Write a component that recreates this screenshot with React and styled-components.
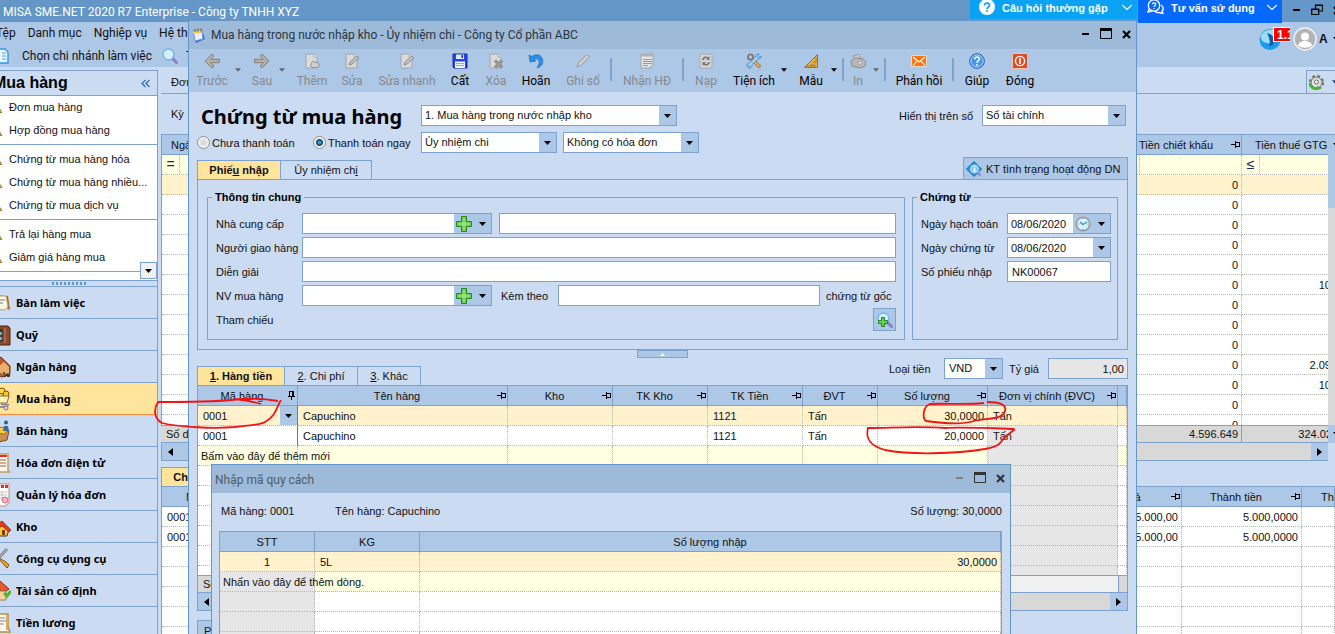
import React from "react";
import styled, { createGlobalStyle } from "styled-components";

const c = {
  line: "#7da2ce",
  frame: "#6596c8",
  bar: "#adc7e6",
  caption: "#9dbad9",
  face: "#cbdbf1",
  tab: "#ffe49c",
  row: "#fff2cc",
  filter: "#ffffe1",
  gray: "#d8d8d8",
  off: "#e6e6e6",
  dots: "#b4b4b4",
};
const ui = `Roboto, "Open Sans", sans-serif`;
const uiBold = `"Noto Sans", "Open Sans", sans-serif`;
const small = `"Liberation Sans", Arial, sans-serif`;

const GlobalStyle = createGlobalStyle`
  *, *::before, *::after { box-sizing: border-box; }
  body { margin: 0; background: ${c.face}; font: 11px/14px ${small}; color: #111; }
  button, input, select { font: inherit; color: inherit; margin: 0; padding: 0; border: 0; border-radius: 0; background: none; }
  svg { display: block; flex: none; }
`;

/* ---------- shell ---------- */
const Screen = styled.div`
  position: relative;
  height: 100vh;
  overflow: hidden;
`;
const MainWindow = styled.div`
  display: flex;
  flex-direction: column;
  height: 100%;
  margin-left: -24px;
  background: ${c.face};
`;
const MainTitle = styled.header`
  flex: none;
  height: 22px;
  padding-left: 27px;
  background: ${c.frame};
  color: #fff;
  font: 12px/24px ${ui};
`;
const MenuBar = styled.nav`
  display: flex;
  align-items: center;
  flex: none;
  gap: 12px;
  height: 22px;
  padding-left: 20px;
  background: ${c.bar};
  font: 12px/20px ${ui};
`;
const BranchBar = styled.div`
  display: flex;
  align-items: center;
  flex: none;
  height: 23px;
  padding-left: 17px;
  gap: 10px;
  background: ${c.bar};
  font: 12px/22px ${ui};
`;
const PlainButton = styled.button`
  display: flex;
  align-items: center;
  gap: ${(p) => p.$gap || 0}px;
`;
const MainBody = styled.div`
  display: flex;
  flex: 1;
  min-height: 0;
`;

/* ---------- sidebar ---------- */
const Sidebar = styled.aside`
  flex: none;
  width: 182px;
  margin-top: 3px;
  border: 1px solid ${c.line};
  border-left: 0;
`;
const SideHead = styled.h2`
  display: flex;
  align-items: center;
  justify-content: space-between;
  height: 25px;
  margin: 0;
  padding: 0 6px 0 17px;
  border-bottom: 1px solid ${c.line};
  font: bold 16px/24px ${small};
  color: #000;
`;
const SideLinks = styled.ul`
  margin: 0;
  padding: 0;
  list-style: none;
  background: #fff;
  position: relative;
  border-bottom: 8px solid #fff;
`;
const SideGroup = styled.div`
  padding: ${(p) => (p.$first ? "0 0 2px" : "3px 0 2px")};
  border-bottom: 1px solid ${c.line};
`;
const SideItem = styled.li`
  display: flex;
  align-items: center;
  height: 23px;
  padding: 0 0 2px 11px;
  gap: 7px;
  a { color: inherit; text-decoration: none; }
`;
const MoreButton = styled.button`
  position: absolute;
  right: 0;
  bottom: -7px;
  display: grid;
  place-items: center;
  width: 17px;
  height: 17px;
  border: 1px solid ${c.line};
  background: #f0f0f0;
`;
const Grip = styled.div`
  height: 7px;
  border-top: 1px solid ${c.line};
  border-bottom: 1px solid ${c.line};
  display: flex;
  gap: 2px;
  padding: 1px 0 0 76px;
  i { width: 2px; height: 3px; background: ${c.frame}; }
`;
const NavItem = styled.button`
  display: flex;
  align-items: center;
  width: 100%;
  height: 32px;
  padding-left: 11px;
  gap: 5px;
  border-bottom: 1px solid ${(p) => (p.$on ? "#ff8c3c" : c.line)};
  background: ${(p) => (p.$on ? c.tab : c.face)};
  font: bold 11px/16px ${uiBold};
  color: #000;
`;

/* ---------- background list ---------- */
const Content = styled.main`
  flex: 1;
  min-width: 0;
  margin-left: 3px;
  display: flex;
  flex-direction: column;
`;
const ContentTabs = styled.div`
  display: flex;
  align-items: center;
  justify-content: space-between;
  height: 27px;
  flex: none;
  padding-left: 10px;
  padding-top: 3px;
  border-bottom: 1px solid ${c.line};
  font: 11px/14px ${small};
`;
const GearButton = styled.button`
  display: flex;
  align-items: center;
  gap: 7px;
  width: 29px;
  height: 23px;
  padding-left: 1px;
  overflow: hidden;
  border: 1px solid ${c.line};
  border-right: 0;
  border-bottom: 0;
`;
const Period = styled.div`
  flex: none;
  height: 40px;
  padding-left: 10px;
  line-height: 40px;
`;
const ListBox = styled.div`
  position: relative;
  flex: none;
`;
const ListFrame = styled.div`
  height: ${(p) => p.$h}px;
  overflow: hidden;
  border-top: 1px solid ${c.line};
  border-left: 1px solid ${c.line};
  background: #fff;
`;
const VScroll = styled.div`
  position: absolute;
  top: 1px;
  right: 0;
  bottom: 0;
  display: flex;
  flex-direction: column;
  justify-content: space-between;
  width: 7px;
  padding: 8px 0 7px 5px;
  overflow: hidden;
  background: linear-gradient(${c.bar} 73px, ${c.gray} 73px, ${c.gray} 290px, ${c.bar} 290px);
`;
const HScroll = styled.div`
  display: flex;
  justify-content: space-between;
  flex: none;
  height: 18px;
  margin-right: ${(p) => p.$right || 0}px;
  border-bottom: 1px solid ${c.line};
  border-left: 1px solid ${c.line};
  border-right: ${(p) => (p.$right ? 0 : 1)}px solid ${c.line};
  background: ${c.gray};
  button { width: 17px; display: grid; place-items: center; background: ${c.bar}; }
`;
const ScrollThumb = styled.div`
  display: flex;
  flex: 0 0 80%;
  background: ${c.bar};
`;
const Gap = styled.div`
  flex: none;
  height: 6px;
`;

/* ---------- tables ---------- */
const Table = styled.table`
  width: 100%;
  table-layout: fixed;
  border-collapse: separate;
  border-spacing: 0;
`;
const Th = styled.th`
  position: relative;
  height: 20px;
  padding: ${(p) => (p.$pin ? "0 11px 0 0" : p.$left ? `0 0 0 ${p.$left}px` : 0)};
  border-right: 1px solid ${c.line};
  border-bottom: 1px solid ${c.line};
  background: ${c.bar};
  font-weight: normal;
  line-height: 18px;
  text-align: ${(p) => (p.$left ? "left" : "center")};
  white-space: nowrap;
  overflow: hidden;
  svg { position: absolute; right: 0; top: 4px; }
`;
const Td = styled.td`
  height: 20px;
  padding: 0 ${(p) => (p.$num ? 3 : 0)}px 0 ${(p) => p.$pad ?? 5}px;
  border-right: 1px ${(p) => (p.$solid ? "solid #777" : `dotted ${c.dots}`)};
  border-bottom: 1px dotted ${c.dots};
  background: ${(p) => p.$bg || "#fff"};
  line-height: 18px;
  text-align: ${(p) => (p.$num ? "right" : p.$center ? "center" : "left")};
  white-space: nowrap;
`;
const FootTd = styled(Td)`
  height: 18px;
  line-height: 16px;
  background: ${(p) => p.$bg || c.gray};
  border-top: 1px solid ${c.line};
  border-bottom: 1px solid ${c.line};
  border-right: ${(p) => (p.$open ? 0 : 1)}px solid ${c.line};
`;
const Operator = styled.span`
  display: block;
  width: 18px;
  height: 19px;
  border-right: 1px dotted ${c.dots};
  text-align: center;
  font: 14px/18px ${small};
  color: #1b2a55;
`;
const CellEditor = styled.span`
  display: flex;
  justify-content: space-between;
  align-items: center;
  height: 19px;
  button { width: 17px; height: 19px; background: ${c.bar}; display: grid; place-items: center; }
`;

/* ---------- document window ---------- */
const DocWindow = styled.section`
  position: absolute;
  top: 20px;
  left: 188px;
  right: 198px;
  bottom: 0;
  overflow: hidden;
  border: 1px solid ${c.frame};
  border-bottom: 0;
  background: ${c.face};
`;
const Caption = styled.header`
  display: flex;
  align-items: center;
  height: 28px;
  padding: 0 5px 0 ${(p) => p.$pad}px;
  gap: 6px;
  background: ${c.caption};
  color: ${(p) => (p.$dim ? "#4e5a68" : "#2b3540")};
  font: 12px/26px ${ui};
`;
const CaptionText = styled.h1`
  flex: 1;
  margin: 0;
  padding-top: ${(p) => (p.$low ? 2 : 0)}px;
  font: inherit;
`;
const CaptionButtons = styled.div`
  display: flex;
  align-items: center;
  gap: ${(p) => p.$gap}px;
  padding-bottom: 2px;
`;
const ToolBar = styled.div`
  display: flex;
  height: 43px;
  padding-left: 1px;
  background: ${c.bar};
`;
const ToolButton = styled.button`
  display: flex;
  flex-direction: column;
  align-items: center;
  flex: none;
  width: ${(p) => p.$w}px;
  padding-top: 4px;
  gap: 4px;
  color: ${(p) => (p.disabled ? "#85898f" : "#000")};
  font: 12px/16px ${ui};
  white-space: nowrap;
`;
const ToolArrow = styled.button`
  flex: none;
  width: 12px;
  padding: 0 0 1px 1px;
`;
const ToolSep = styled.i`
  flex: none;
  width: 2px;
  height: 23px;
  margin-top: 9px;
  background: ${c.line};
`;
const DocBody = styled.div`
  padding: 13px 8px 0 8px;
`;
const DocHead = styled.div`
  display: flex;
  align-items: center;
  height: 21px;
  padding-right: 2px;
`;
const DocTitle = styled.h2`
  width: 224px;
  margin: 0;
  padding: 2px 0 0 4px;
  font: bold 20px/21px ${uiBold};
  color: #000;
  white-space: nowrap;
`;
const HeadLabel = styled.label`
  margin-left: auto;
  margin-right: 9px;
`;
const PayRow = styled.div`
  display: flex;
  align-items: center;
  height: 21px;
  margin-top: 6px;
`;
const RadioLabel = styled.label`
  display: flex;
  align-items: center;
  gap: 2px;
  width: ${(p) => p.$w}px;
`;
const Radio = styled.input`
  appearance: none;
  width: 13px;
  height: 13px;
  border: 1px solid #8a8f94;
  border-radius: 50%;
  background: radial-gradient(circle, #d8dadc 2px, #f6f6f6 5px);
  &:checked {
    background: radial-gradient(circle, #3a9ad0 1px, #0e3f66 3px, #f2f2f2 4px);
  }
`;
const ComboFrame = styled.span`
  display: flex;
  flex: none;
  width: ${(p) => p.$w}px;
  height: 21px;
  margin-left: ${(p) => p.$ml || 0}px;
  border: 1px solid ${c.line};
  background: #fff;
`;
const ComboSelect = styled.select`
  appearance: none;
  flex: 1;
  min-width: 0;
  padding-left: ${(p) => p.$pad ?? 3}px;
  line-height: 17px;
  outline: 0;
`;
const ComboInput = styled.input`
  flex: 1;
  min-width: 0;
  padding-left: 3px;
  outline: 0;
`;
const ComboArrow = styled.span`
  display: grid;
  place-items: center;
  width: 17px;
  background: ${c.bar};
  pointer-events: none;
`;
const ComboButton = styled.button`
  display: grid;
  place-items: center;
  width: ${(p) => p.$w || 17}px;
  background: ${c.bar};
`;
const TextBox = styled.input`
  flex: ${(p) => (p.$w ? "none" : 1)};
  width: ${(p) => (p.$w ? `${p.$w}px` : "auto")};
  min-width: 0;
  height: 21px;
  margin-left: ${(p) => p.$ml || 0}px;
  padding: 0 3px 0 4px;
  border: 1px solid ${c.line};
  background: ${(p) => (p.readOnly ? c.off : "#fff")};
  text-align: ${(p) => (p.readOnly ? "right" : "left")};
  outline: 0;
`;
const TabRow = styled.div`
  display: flex;
  align-items: flex-end;
  height: ${(p) => p.$h}px;
  margin-top: ${(p) => p.$mt || 0}px;
`;
const Tab = styled.button`
  width: ${(p) => p.$w}px;
  height: 19px;
  border: 1px solid ${c.line};
  border-bottom: 0;
  border-left-width: ${(p) => (p.$on ? 1 : 0)}px;
  background: ${(p) => (p.$on ? c.tab : c.face)};
  font-weight: ${(p) => (p.$on ? "bold" : "normal")};
  line-height: 18px;
  white-space: nowrap;
`;
const StatusButton = styled.button`
  display: flex;
  align-items: center;
  gap: 4px;
  width: 165px;
  height: 22px;
  margin-left: auto;
  padding-left: 2px;
  border: 1px solid ${c.line};
  border-bottom: 0;
  background: ${c.bar};
  white-space: nowrap;
`;
const Panel = styled.div`
  display: flex;
  gap: 7px;
  padding: 10px 9px 9px;
  border: 1px solid ${c.line};
`;
const Group = styled.fieldset`
  flex: ${(p) => (p.$w ? "none" : 1)};
  width: ${(p) => (p.$w ? `${p.$w}px` : "auto")};
  min-width: 0;
  margin: 0;
  padding: 9px ${(p) => (p.$w ? 6 : 8)}px 9px 8px;
  border: 1px solid ${c.line};
  legend { height: 14px; margin-left: -4px; padding: 0 3px; font-weight: bold; color: #000; }
`;
const Rows = styled.div`
  display: flex;
  flex-direction: column;
  gap: 3px;
`;
const FormRow = styled.div`
  display: flex;
  align-items: center;
  min-height: 21px;
`;
const RowLabel = styled.label`
  flex: none;
  width: 86px;
`;
const InlineLabel = styled.label`
  flex: none;
  margin-left: ${(p) => p.$ml}px;
  width: ${(p) => p.$w}px;
`;
const RefButton = styled.button`
  display: grid;
  place-items: center;
  width: 23px;
  height: 23px;
  margin: -1px 0 -1px auto;
  border: 1px solid ${c.line};
  background: ${c.bar};
`;
const Collapse = styled.button`
  display: grid;
  place-items: center;
  width: 51px;
  height: 8px;
  margin: 0 auto;
  border: 1px solid ${c.line};
  background: ${c.bar};
`;
const Currency = styled.div`
  display: flex;
  align-items: center;
  align-self: flex-start;
  margin-left: auto;
`;
const GridFrame = styled.div`
  height: 190px;
  overflow: hidden;
  border: 1px solid ${c.line};
  border-bottom: 0;
  background: #fff;
`;
const FootFrame = styled.div`
  border-left: 1px solid ${c.line};
  overflow: hidden;
`;
const BottomButton = styled.button`
  display: block;
  width: 60px;
  height: 22px;
  margin-top: 9px;
  padding-left: 6px;
  border: 1px solid ${c.line};
  background: ${c.bar};
  text-align: left;
`;

/* ---------- specification dialog ---------- */
const Dialog = styled.section`
  position: absolute;
  top: 443px;
  left: 22px;
  right: 125px;
  bottom: 0;
  overflow: hidden;
  border: 1px solid ${c.frame};
  border-bottom: 0;
  background: ${c.face};
`;
const DialogInfo = styled.div`
  display: flex;
  height: 38px;
  padding: 0 8px 0 9px;
  line-height: 36px;
  span:first-child { width: 114px; }
  span:last-child { margin-left: auto; }
`;
const DialogTable = styled.div`
  margin: 0 8px 0 7px;
  border: 1px solid ${c.line};
  border-bottom: 0;
  background: #fff;
`;

/* ---------- top right ---------- */
const Faq = styled.button`
  position: absolute;
  top: 0;
  right: ${(p) => p.$right}px;
  display: flex;
  align-items: flex-start;
  width: ${(p) => p.$w}px;
  height: ${(p) => p.$h}px;
  padding: 0 5px 0 9px;
  background: ${(p) => p.$bg};
  color: #fff;
  font: bold 11px/16px ${small};
  white-space: nowrap;
  span { margin-left: 7px; margin-right: auto; }
`;
const AppButtons = styled.div`
  position: absolute;
  top: 4px;
  right: -7px;
  display: flex;
  align-items: center;
  gap: 10px;
`;
const Account = styled.div`
  position: absolute;
  top: 27px;
  right: 0;
  display: flex;
  align-items: center;
  width: 76px;
  overflow: hidden;
  font: bold 12px/16px ${small};
`;
const Badge = styled.span`
  align-self: flex-start;
  flex: none;
  width: 17px;
  height: 15px;
  margin-left: -8px;
  margin-right: 3px;
  padding-left: 3px;
  overflow: hidden;
  border: 1px solid #fff;
  border-right: 0;
  background: #f00;
  color: #fff;
  line-height: 14px;
  z-index: 1;
`;
const Initial = styled.span`
  margin: 0 5px 0 2px;
`;
const Marks = styled.svg`
  position: absolute;
  top: 0;
  left: 0;
  pointer-events: none;
`;

/* ---------- icons ---------- */
const Down = ({ w = 7, fill = "#000" }) => (
  <svg width={w} height="4" viewBox="0 0 7 4"><path d="M0 0h7L3.500 4z" fill={fill} /></svg>
);
const Side = ({ flip }) => (
  <svg width="5" height="8" viewBox="0 0 5 8"><path d={flip ? "M5 0v8L0 4z" : "M0 0v8l5-4z"} fill="#000" /></svg>
);
const Pin = ({ up }) => (
  <svg width="10" height="10" viewBox="0 0 10 10" fill="none" stroke="#000" strokeWidth="1" shapeRendering="crispEdges">
    {up ? <path d="M2.500 1v5M6.500 1v5M5.500 1v5M2 1.500h5M1 6.500h7M4.500 7v3" /> : <path d="M0 5.500h4M4.500 2v7M5 3.500h4M5 7.500h4M8.500 3v5" />}
  </svg>
);
const Min = ({ color = "#000" }) => <svg width="8" height="12"><path d="M0 5h7v2H0z" fill={color} /></svg>;
const Max = ({ color = "#000" }) => <svg width="12" height="12"><path d="M.5 1h11v9.500H.5z" fill="none" stroke={color} /><path d="M0 0h12v3H0z" fill={color} /></svg>;
const Close = ({ color = "#000" }) => <svg width="9" height="9"><path d="M1 1l7 7M8 1L1 8" stroke={color} strokeWidth="2.200" /></svg>;
const Restore = () => (
  <svg width="12" height="12" fill="none" stroke="#000"><path d="M4.500 5V1h7v6H8M4 1.500h8" strokeWidth="1.200" /><path d="M.7 5h7v5.500h-7zM0 5.500h8" strokeWidth="1.200" /></svg>
);
const Arrow = ({ flip }) => (
  <svg width="16" height="16" viewBox="0 0 16 16"><path transform={flip ? "translate(16 0) scale(-1 1)" : undefined} d="M8 1L1 8l7 7 2-2-3.300-3.300H15.500V6.300H6.700L10 3z" fill="#b4b0a8" stroke="#807b73" strokeWidth=".9" /></svg>
);
const Doc = ({ children }) => (
  <svg width="16" height="16" viewBox="0 0 16 16"><path d="M2 1h8l3 3v11H2z" fill="#d9dadb" stroke="#a3a6a8" /><path d="M10 1v3h3" fill="#fff" stroke="#a3a6a8" />{children}</svg>
);
const icons = {
  back: <Arrow />,
  next: <Arrow flip />,
  add: <Doc><path d="M8 9.500c0-2 3-2 3 0h3l1.500 2.500-1.500 2.500H8l-1.500-2z" fill="#cfcfcf" stroke="#8f8f8f" /></Doc>,
  edit: <Doc><path d="M5 12l1-3 7-6 2 2-7 6z" fill="#c4c4c4" stroke="#8e8e8e" /></Doc>,
  save: (
    <svg width="16" height="16" viewBox="0 0 16 16"><path d="M1 1h14v14H2l-1-1z" fill="#2446e8" stroke="#1228a8" /><path d="M4 1.500h8V6H4z" fill="#dfe9ff" /><path d="M9.500 2h1.500v3H9.500z" fill="#1228a8" /><path d="M3 8.500h10V15H3z" fill="#eef3ff" /><path d="M4 10.500h8M4 12.500h8" stroke="#8aa6ee" /></svg>
  ),
  del: <Doc><path d="M7 7.500l7 7M14 7.500l-7 7" stroke="#7c7c7c" strokeWidth="3" /><path d="M7 7.500l7 7M14 7.500l-7 7" stroke="#c2c2c2" strokeWidth="1" /></Doc>,
  undo: <svg width="16" height="16" viewBox="0 0 16 16"><path d="M1 2l1 7 6-1-2-2c3-1 6 1 5 5l-2 4c4-1 7-5 5.500-9C13 1.500 8 .5 4 3.500z" fill="#2b8fe4" stroke="#1a64b4" strokeWidth=".6" /></svg>,
  post: <svg width="16" height="16" viewBox="0 0 16 16"><path d="M2 14l1-4 9-8.500L14.500 4l-9 8.500z" fill="#cfcfcf" stroke="#999" /></svg>,
  invoice: <svg width="16" height="16" viewBox="0 0 16 16"><path d="M2 1h12v10l-3 4H2z" fill="#e4e4e4" stroke="#a4a4a4" /><path d="M2 1h12v2.500H2z" fill="#b2b2b2" /><path d="M4 6.500h9M4 8.500h9M4 10.500h9M4 12.500h5" stroke="#999" /></svg>,
  reload: <svg width="16" height="16" viewBox="0 0 16 16"><path d="M2 1h12v14H2z" fill="#d6d6d6" stroke="#aaa" /><path d="M5 7c0-3 4-3.500 5.500-1.500M11 9c0 3-4 3.500-5.500 1.500" fill="none" stroke="#777" strokeWidth="1.600" /><path d="M11.500 3v4H8zM4.500 13V9H8z" fill="#777" /></svg>,
  tools: (
    <svg width="16" height="16" viewBox="0 0 16 16"><path d="M6 6l8 8" stroke="#b5651d" strokeWidth="3.400" /><path d="M7 7l6.500 6.500" stroke="#f4b04e" strokeWidth="1.800" /><circle cx="4.500" cy="4" r="2.600" fill="none" stroke="#83796e" strokeWidth="1.800" /><path d="M15 3l-3 1.500-1-1L13 1c-2-.5-4 1-3.500 3L3.500 10c-2 0-3 1.500-2.500 3.500l2-1 1 1L2.500 15c2 .5 4-1 3.500-3.500L12 6c2 0 3.500-1 3-3z" fill="#a9d3f5" stroke="#3a82c4" strokeWidth=".8" /></svg>
  ),
  ruler: <svg width="16" height="16" viewBox="0 0 16 16"><path d="M14.500 1.500v13h-13z" fill="#f5b53c" stroke="#a9701a" /><path d="M11.500 8v4h-4z" fill="#adc7e6" stroke="#a9701a" strokeWidth=".7" /><path d="M4 13.500v-1M6 13.500v-1M8 13.500v-1M10 13.500v-1M12 13.500v-1M13.500 5h-1M13.500 7h-1M13.500 9h-1" stroke="#5c3a08" /></svg>,
  print: <svg width="16" height="16" viewBox="0 0 16 16"><path d="M3 3l6-2 2 4-6 2z" fill="#c4c4c4" stroke="#969696" strokeWidth=".8" /><path d="M1 8l4-3 8 1 3 3-1 4-5 2-8-2z" fill="#b8b8b8" stroke="#8e8e8e" /><circle cx="10" cy="10" r="1.800" fill="#dedede" stroke="#999" strokeWidth=".7" /></svg>,
  mail: <svg width="16" height="16" viewBox="0 0 16 16"><path d="M.5 2.500h15v11H.5z" fill="#ff7411" stroke="#e0dcd0" /><path d="M2 4l6 5 6-5M2 12.500l4-4.500M14 12.500L10 8" fill="none" stroke="#fff" strokeWidth="1.100" /></svg>,
  help: <svg width="16" height="16" viewBox="0 0 16 16"><circle cx="8" cy="8" r="7.300" fill="#4796e8" stroke="#1d56ae" /><circle cx="8" cy="8" r="6.200" fill="none" stroke="#d5e8fc" strokeWidth=".8" /><path d="M5.800 6.200c0-3 4.600-2.800 4.600-.2C10.400 7.700 8 7.800 8 9.700M8 11v1.700" fill="none" stroke="#fff" strokeWidth="1.600" /></svg>,
  exit: <svg width="16" height="16" viewBox="0 0 16 16"><path d="M.5.5h15v15H.5z" fill="#dd4a24" stroke="#f2c4b0" /><circle cx="8" cy="8" r="4.600" fill="none" stroke="#fff" strokeWidth="1.400" /><path d="M8 5v6" stroke="#fff" strokeWidth="1.600" /></svg>,
};
const Plus = () => (
  <svg width="16" height="16" viewBox="0 0 16 16"><path d="M5.500 .5h5v5h5v5h-5v5h-5v-5h-5v-5h5z" fill="#6ccc4e" stroke="#1f8a1d" /><path d="M7.500 2h1v12h-1zM2 7.500h12v1H2z" fill="#b5ec9c" /></svg>
);
const Clock = () => (
  <svg width="16" height="16" viewBox="0 0 16 16"><circle cx="8" cy="8" r="6.800" fill="#d4f1f7" stroke="#8f9da6" strokeWidth="1.600" /><path d="M5 6l3 2.500L12 6" fill="none" stroke="#3f86b4" strokeWidth="1.200" /><path d="M8 2v1M8 13v1M2.500 8h1M12.500 8h1" stroke="#d45a3c" /></svg>
);
const Lens = ({ plus, size = 16 }) => (
  <svg width={size} height={size} viewBox="0 0 16 16"><path d="M10.500 10.500l4 4" stroke="#8e7cc8" strokeWidth="3" strokeLinecap="round" /><circle cx="6.500" cy="6.500" r="5.500" fill="#d2effc" stroke="#6eb4e2" strokeWidth="1.300" />{plus && <path d="M4.500 5.500h3v3h3v3h-3v3h-3v-3h-3v-3h3z" fill="#6ccc4e" stroke="#1f8a1d" />}</svg>
);
const Info = () => (
  <svg width="16" height="16" viewBox="0 0 16 16"><path d="M8 .5L15.500 8 8 15.500.5 8z" fill="#1f94dc" stroke="#1670b6" /><circle cx="8.500" cy="8" r="4" fill="#7cc8f4" stroke="#bfe6fb" /><path d="M8.500 5v1.200M8.500 7.300v3.400" stroke="#fff" strokeWidth="1.800" /><path d="M12 12l2.500 2.500" stroke="#9683cc" strokeWidth="2.400" /></svg>
);
const Notes = () => (
  <svg width="13" height="15" viewBox="0 0 13 15"><path d="M1 5l9-3 3 9-9 4z" fill="#2f6fd6" /><path d="M1 3l9-1 1 9-8 2z" fill="#e6f0ff" stroke="#6d8fd0" /><path d="M1 3l9-1v3L1 6z" fill="#f3cc54" /><path d="M3 1v3M6 .5v3M9 .5v3" stroke="#555" /></svg>
);
const Gear = () => (
  <svg width="17" height="17" viewBox="0 0 17 17"><circle cx="8.500" cy="8.500" r="6" fill="#d6d9d4" stroke="#707671" strokeWidth="3.200" strokeDasharray="2.700 2" /><circle cx="8.500" cy="8.500" r="5.300" fill="#dfe2de" stroke="#7d827e" /><path d="M2 9c0 4 3.500 6.500 8 5.500" fill="none" stroke="#43b52f" strokeWidth="2.600" /><path d="M9 11.500l3.500 3-4 2z" fill="#43b52f" /><circle cx="8.500" cy="8" r="2" fill="#fff" stroke="#666" /></svg>
);
const Dot = () => <svg width="15" height="16" viewBox="0 0 15 16"><path d="M2 14V3h6l3 5 4 5.500z" fill="#e9d56a" stroke="#8c7a16" /></svg>;
const Page = () => (
  <svg width="16" height="16" viewBox="0 0 16 16"><path d="M1 1h11l3 3v11H1z" fill="#e8f6ff" stroke="#2d9be0" strokeWidth="1.400" /><path d="M9 5h4M9 8h4M9 11h4" stroke="#4aa9e4" /></svg>
);
const ChevronSvg = styled.svg`
  margin-top: 4px;
`;
const Chevron = () => <ChevronSvg width="10" height="7"><path d="M0 1l5 4.500L10 1" fill="none" stroke="#fff" strokeWidth="1.100" /></ChevronSvg>;

const NavIcon = ({ children }) => <svg width="24" height="24" viewBox="0 0 24 24">{children}</svg>;
const navIcons = [
  <NavIcon><path d="M6 4l15 1 2 14-6-3-12 3z" fill="#a66a2d" /><path d="M5 5h14l2 11-3 3-13-1z" fill="#fdf6e4" stroke="#c4a067" /><path d="M12 9h6M12 12h4" stroke="#6b7a8c" /></NavIcon>,
  <NavIcon><path d="M3 3h18l2 2v17H3z" fill="#8c4a2e" stroke="#4a2212" /><path d="M6 6h10v13H6z" fill="#33393c" /><path d="M10 9h5v3h-5zM10 14h5v3h-5z" fill="#9aa3a3" /><path d="M18 5v15" stroke="#c98358" /></NavIcon>,
  <NavIcon><path d="M5 10l9-8 9 9v8l-8 3-10-4z" fill="#b75c2e" stroke="#6a3216" /><path d="M12 11l5-4 5 5v6l-5 2-5-3z" fill="#e9b06c" /><path d="M17 21h6M16 18l7 3" stroke="#403020" strokeWidth="2" strokeDasharray="2 1" /></NavIcon>,
  <NavIcon><circle cx="15" cy="4" r="3" fill="#ffd83c" stroke="#7a5200" /><circle cx="19" cy="7" r="3" fill="#ffc51e" stroke="#7a5200" /><path d="M8 9h14l-2 7H10z" fill="#fff2b8" stroke="#8a6d3a" /><path d="M14 17l8 1M10 20h10" stroke="#8f8f95" strokeWidth="2" /><circle cx="19" cy="21" r="2" fill="#ddd" stroke="#777" /></NavIcon>,
  <NavIcon><path d="M4 12h18l-2 9-8 2-8-3z" fill="#c98d51" stroke="#7b4a1e" /><path d="M7 12c2-5 12-5 13 0l-2 3-9-1z" fill="#ffc93a" stroke="#a87412" /><circle cx="19" cy="3.500" r="2" fill="#3c5c88" /><path d="M17 7h4l1 5h-6z" fill="#3c6ca8" /></NavIcon>,
  <NavIcon><path d="M6 3h15v17l2 1H7z" fill="#fffaf0" stroke="#cf9a5e" strokeWidth="1.500" /><path d="M12 5h8" stroke="#de3030" strokeWidth="2" /><path d="M13 9h6M13 12h6M13 15h6" stroke="#9a5f3a" /></NavIcon>,
  <NavIcon><path d="M4 1h18v19l-4 3H4z" fill="#fff" stroke="#c88a5c" /><path d="M6 3.500h15" stroke="#e02a3a" strokeWidth="3" strokeDasharray="3 1" /><path d="M10 9h10M10 12h10M10 15h7M15 8v10" stroke="#c9c2cc" /><circle cx="18" cy="17" r="3" fill="#f4b8cc" stroke="#d8628c" /></NavIcon>,
  <NavIcon><path d="M9 14l7-5 6 5-2 7H12z" fill="#ffcb3c" stroke="#5c3208" /><path d="M6 12l9-6 9 9-2 2-7-6-6 4z" fill="#e6391d" stroke="#7a1a0a" strokeWidth=".7" /><path d="M15 15h3v5h-3z" fill="#7a4310" /></NavIcon>,
  <NavIcon><path d="M20 2L9 14" stroke="#777b80" strokeWidth="3" /><path d="M21 1L11 12" stroke="#d4d7da" strokeWidth="1" /><path d="M10 10l10 11 2-3-3-3z" fill="#f2a52c" stroke="#80500d" /></NavIcon>,
  <NavIcon><path d="M5 9l8-7 9 8-3 2H9z" fill="#e85a2c" stroke="#8e2a0c" /><path d="M9 12h10v9H9z" fill="#f4d4a0" stroke="#a87440" /><path d="M17 14l3 3 4-5" fill="none" stroke="#51b52e" strokeWidth="3" /></NavIcon>,
  <NavIcon><path d="M5 3h16v13l2 5H6z" fill="#fff8e6" stroke="#b88a4c" strokeWidth="1.400" /><path d="M12 7h6M12 10h7M12 13h5" stroke="#7d8794" /><path d="M20 4v15" stroke="#d8ab5c" strokeWidth="2" /></NavIcon>,
];

/* ---------- data ---------- */
const sideGroups = [
  ["Đơn mua hàng", "Hợp đồng mua hàng"],
  ["Chứng từ mua hàng hóa", "Chứng từ mua  hàng nhiều...", "Chứng từ mua dịch vụ"],
  ["Trả lại hàng mua", "Giảm giá hàng mua"],
];
const navs = ["Bàn làm việc", "Quỹ", "Ngân hàng", "Mua hàng", "Bán hàng", "Hóa đơn điện tử", "Quản lý hóa đơn", "Kho", "Công cụ dụng cụ", "Tài sản cố định", "Tiền lương"];
const taxes = ["", "", "", "", "", "10", "", "", "", "2.09", "10", "", ""];
const tools = [
  ["back", "Trước", 44, 1], ["arrow", 1], ["next", "Sau", 32, 1], ["arrow", 1],
  ["add", "Thêm", 44, 1], ["edit", "Sửa", 36, 1], ["edit", "Sửa nhanh", 74, 1],
  ["save", "Cất", 32], ["del", "Xóa", 40, 1], ["undo", "Hoãn", 40], ["post", "Ghi sổ", 54, 1], ["sep"],
  ["invoice", "Nhận HĐ", 70, 1], ["sep"], ["reload", "Nạp", 44, 1], ["tools", "Tiện ích", 52], ["arrow"],
  ["ruler", "Mẫu", 38], ["arrow"], ["sep"], ["print", "In", 28, 1], ["arrow", 1], ["sep"],
  ["mail", "Phản hồi", 66], ["sep"], ["help", "Giúp", 46], ["exit", "Đóng", 40],
];
const gridCols = [100, 210, 105, 95, 95, 75, 110, 130, 9];
const gridHeads = ["Mã hàng", "Tên hàng", "Kho", "TK Kho", "TK Tiền", "ĐVT", "Số lượng", "Đơn vị chính (ĐVC)"];
const Cols = ({ widths, auto }) => (
  <colgroup>{widths.map((w, i) => <col key={i} width={i === auto ? undefined : w} />)}</colgroup>
);

function Combo({ id, value, w, ml, pad }) {
  return (
    <ComboFrame $w={w} $ml={ml}>
      <ComboSelect id={id} aria-label={id ? undefined : value} $pad={pad} defaultValue={value}>
        <option>{value}</option>
      </ComboSelect>
      <ComboArrow><Down /></ComboArrow>
    </ComboFrame>
  );
}
function Picker({ id, value = "", w, children }) {
  return (
    <ComboFrame $w={w}>
      <ComboInput id={id} defaultValue={value} />
      {children}
      <ComboButton type="button" aria-label="Chọn"><Down /></ComboButton>
    </ComboFrame>
  );
}

function MainSidebar() {
  return (
    <Sidebar>
      <SideHead>
        Mua hàng
        <svg width="10" height="9" fill="none" stroke="#3c6ea8" strokeWidth="1.300"><path d="M4.500 1l-3.500 3.500 3.500 3.500M8.500 1L5 4.500 8.500 8" /></svg>
      </SideHead>
      <SideLinks>
        {sideGroups.map((group, g) => (
          <SideGroup key={g} $first={g === 0}>
            {group.map((t) => <SideItem key={t}><Dot /><a href="#list">{t}</a></SideItem>)}
          </SideGroup>
        ))}
        <MoreButton aria-label="Thêm mục"><Down /></MoreButton>
      </SideLinks>
      <Grip>{Array.from({ length: 9 }, (_, i) => <i key={i} />)}</Grip>
      {navs.map((t, i) => <NavItem key={t} $on={i === 3}>{navIcons[i]}{t}</NavItem>)}
    </Sidebar>
  );
}

function BackgroundLists() {
  const top = [96, 0, 120, 93];
  const low = [92, 0, 110, 120, 33];
  return (
    <Content>
      <ContentTabs>Đơn mua hàng<GearButton aria-label="Tùy chọn"><Gear /><Down w={6} fill="#1c3f7c" /></GearButton></ContentTabs>
      <Period>Kỳ</Period>
      <ListBox>
        <ListFrame $h={291}>
          <Table>
            <Cols widths={top} auto={1} />
            <thead><tr><Th>Ngày hạch toán</Th><Th /><Th $pin>Tiền chiết khấu<Pin /></Th><Th $left={13}>Tiền thuế GTG</Th></tr></thead>
            <tbody>
              <tr>
                <Td $bg={c.filter} $pad={0}><Operator>=</Operator></Td>
                <Td $bg={c.filter} />
                <Td $bg={c.filter} $pad={0}><Operator /></Td>
                <Td $bg={c.filter} $pad={0}><Operator>≤</Operator></Td>
              </tr>
              {taxes.map((t, i) => {
                const bg = i === 0 ? c.row : "#fff";
                return <tr key={i}><Td $bg={bg} /><Td $bg={bg} /><Td $bg={bg} $num>0</Td><Td $bg={bg} $num>{t}</Td></tr>;
              })}
            </tbody>
          </Table>
        </ListFrame>
        <Table>
          <Cols widths={top} auto={1} />
          <tbody><tr><FootTd>Số dòng</FootTd><FootTd /><FootTd $num>4.596.649</FootTd><FootTd $num $open>324.02</FootTd></tr></tbody>
        </Table>
        <VScroll><Down /><Down /></VScroll>
      </ListBox>
      <HScroll $right={7}><ScrollThumb><button aria-label="Trái"><Side flip /></button></ScrollThumb><button aria-label="Phải"><Side /></button></HScroll>
      <Gap />
      <TabRow $h={20}><Tab $on $w={62}>Chi tiết</Tab></TabRow>
      <ListFrame $h={190}>
        <Table>
          <Cols widths={low} auto={1} />
          <thead><tr><Th>Mã hàng</Th><Th /><Th $pin>Đơn giá<Pin /></Th><Th $pin>Thành tiền<Pin /></Th><Th $left={19}>Th</Th></tr></thead>
          <tbody>
            {[0, 1, 2, 3, 4, 5, 6].map((i) => (
              <tr key={i}><Td>{i < 2 ? "0001" : ""}</Td><Td /><Td $num>{i < 2 ? "5.000,00" : ""}</Td><Td $num>{i < 2 ? "5.000,0000" : ""}</Td><Td /></tr>
            ))}
          </tbody>
        </Table>
      </ListFrame>
    </Content>
  );
}

function ItemsGrid() {
  return (
    <>
      <GridFrame>
        <Table>
          <Cols widths={gridCols} auto={1} />
          <thead>
            <tr>{gridHeads.map((h, i) => <Th key={h} $pin>{h}<Pin up={i === 0} /></Th>)}<Th /></tr>
          </thead>
          <tbody>
            {["30,0000", "20,0000"].map((qty, i) => {
              const bg = i ? "#fff" : c.row;
              return (
                <tr key={qty}>
                  <Td $bg={bg} $solid>{i ? "0001" : <CellEditor>0001<button aria-label="Chọn mã hàng"><Down /></button></CellEditor>}</Td>
                  <Td $bg={bg}>Capuchino</Td><Td $bg={bg} /><Td $bg={bg} />
                  <Td $bg={bg}>1121</Td><Td $bg={bg}>Tấn</Td><Td $bg={bg} $num>{qty}</Td>
                  <Td $bg={i ? c.off : c.row}>Tấn</Td><Td $bg={bg} />
                </tr>
              );
            })}
            <tr>
              <Td $bg={c.filter} $pad={3}>Bấm vào đây để thêm mới</Td>
              {[1, 2, 3, 4, 5, 6, 7, 8].map((k) => <Td key={k} $bg={k === 7 ? c.off : c.filter} />)}
            </tr>
            {[0, 1, 2, 3, 4, 5].map((r) => (
              <tr key={r}>{gridCols.map((_, k) => <Td key={k} $bg={k === 7 ? c.off : "#fff"} />)}</tr>
            ))}
          </tbody>
        </Table>
      </GridFrame>
      <FootFrame>
        <Table>
          <Cols widths={gridCols} auto={1} />
          <tbody><tr><FootTd>Số dòng</FootTd>{[1, 2, 3, 4, 5, 6].map((k) => <FootTd key={k} />)}<FootTd $bg="#f0f0f0" /><FootTd /></tr></tbody>
        </Table>
      </FootFrame>
      <HScroll><button aria-label="Trái"><Side flip /></button><button aria-label="Phải"><Side /></button></HScroll>
      <BottomButton>Phím tắt</BottomButton>
    </>
  );
}

function SpecDialog() {
  return (
    <Dialog>
      <Caption $pad={3} $dim>
        <CaptionText $low>Nhập mã quy cách</CaptionText>
        <CaptionButtons $gap={10}><Min color="#7b8087" /><Max color="#333" /><Close color="#333" /></CaptionButtons>
      </Caption>
      <DialogInfo><span>Mã hàng: 0001</span><span>Tên hàng: Capuchino</span><span>Số lượng: 30,0000</span></DialogInfo>
      <DialogTable>
        <Table>
          <Cols widths={[95, 105, 0]} auto={2} />
          <thead><tr><Th>STT</Th><Th>KG</Th><Th>Số lượng nhập</Th></tr></thead>
          <tbody>
            <tr><Td $bg={c.row} $center $pad={0}>1</Td><Td $bg={c.row}>5L</Td><Td $bg={c.row} $num>30,0000</Td></tr>
            <tr><Td $bg={c.off} $pad={3}>Nhấn vào đây để thêm dòng.</Td><Td $bg={c.filter} /><Td $bg={c.filter} /></tr>
            {[0, 1, 2].map((r) => <tr key={r}><Td $bg={c.off} /><Td /><Td /></tr>)}
          </tbody>
        </Table>
      </DialogTable>
    </Dialog>
  );
}

function PurchaseWindow() {
  return (
    <DocWindow>
      <Caption $pad={3}>
        <Notes />
        <CaptionText>Mua hàng trong nước nhập kho - Ủy nhiệm chi - Công ty Cổ phần ABC</CaptionText>
        <CaptionButtons $gap={10}><Min /><Max /><Close /></CaptionButtons>
      </Caption>
      <ToolBar>
        {tools.map((t, i) => {
          if (t[0] === "sep") return <ToolSep key={i} />;
          if (t[0] === "arrow") return <ToolArrow key={i} aria-label="Mở" disabled={!!t[1]}><Down w={6} fill={t[1] ? "#666" : "#000"} /></ToolArrow>;
          return <ToolButton key={i} $w={t[2]} disabled={!!t[3]}>{icons[t[0]]}{t[1]}</ToolButton>;
        })}
      </ToolBar>
      <DocBody>
        <DocHead>
          <DocTitle>Chứng từ mua hàng</DocTitle>
          <Combo value="1. Mua hàng trong nước nhập kho" w={256} />
          <HeadLabel htmlFor="book">Hiển thị trên sổ</HeadLabel>
          <Combo id="book" value="Sổ tài chính" w={144} />
        </DocHead>
        <PayRow>
          <RadioLabel $w={116}><Radio type="radio" name="pay" />Chưa thanh toán</RadioLabel>
          <RadioLabel $w={108}><Radio type="radio" name="pay" defaultChecked />Thanh toán ngay</RadioLabel>
          <Combo value="Ủy nhiệm chi" w={136} />
          <Combo value="Không có hóa đơn" w={136} ml={6} />
        </PayRow>
        <TabRow $h={22} $mt={4}>
          <Tab $on $w={84}>Phiế<u>u</u> nhập</Tab>
          <Tab $w={91}>Ủy nhiệm ch<u>i</u></Tab>
          <StatusButton><Info />KT tình trạng hoạt động DN</StatusButton>
        </TabRow>
        <Panel>
          <Group>
            <legend>Thông tin chung</legend>
            <Rows>
              <FormRow>
                <RowLabel htmlFor="vendor">Nhà cung cấp</RowLabel>
                <Picker id="vendor" w={190}><ComboButton $w={20} aria-label="Thêm"><Plus /></ComboButton></Picker>
                <TextBox aria-label="Tên nhà cung cấp" $ml={7} />
              </FormRow>
              <FormRow><RowLabel htmlFor="deliverer">Người giao hàng</RowLabel><TextBox id="deliverer" /></FormRow>
              <FormRow><RowLabel htmlFor="memo">Diễn giải</RowLabel><TextBox id="memo" /></FormRow>
              <FormRow>
                <RowLabel htmlFor="buyer">NV mua hàng</RowLabel>
                <Picker id="buyer" w={190}><ComboButton $w={20} aria-label="Thêm"><Plus /></ComboButton></Picker>
                <InlineLabel htmlFor="attach" $ml={9} $w={57}>Kèm theo</InlineLabel>
                <TextBox id="attach" />
                <InlineLabel htmlFor="attach" $ml={6} $w={70}>chứng từ gốc</InlineLabel>
              </FormRow>
              <FormRow><span>Tham chiếu</span><RefButton aria-label="Tìm chứng từ"><Lens plus /></RefButton></FormRow>
            </Rows>
          </Group>
          <Group $w={206}>
            <legend>Chứng từ</legend>
            <Rows>
              <FormRow><RowLabel htmlFor="d1">Ngày hạch toán</RowLabel><Picker id="d1" w={104} value="08/06/2020"><ComboButton $w={20} aria-label="Giờ"><Clock /></ComboButton></Picker></FormRow>
              <FormRow><RowLabel htmlFor="d2">Ngày chứng từ</RowLabel><Picker id="d2" w={104} value="08/06/2020" /></FormRow>
              <FormRow><RowLabel htmlFor="no">Số phiếu nhập</RowLabel><TextBox id="no" $w={104} defaultValue="NK00067" /></FormRow>
            </Rows>
          </Group>
        </Panel>
        <Collapse aria-label="Thu gọn"><svg width="5" height="3"><path d="M0 3h5L2.500 0z" fill="#fff" /></svg></Collapse>
        <TabRow $h={27}>
          <Tab $on $w={88}><u>1</u>. Hàng tiền</Tab>
          <Tab $w={73}><u>2</u>. Chi phí</Tab>
          <Tab $w={63}><u>3</u>. Khác</Tab>
          <Currency>
            <InlineLabel htmlFor="cur" $ml={0} $w={55}>Loại tiền</InlineLabel>
            <Combo id="cur" value="VND" w={59} pad={4} />
            <InlineLabel htmlFor="rate" $ml={6} $w={39}>Tỷ giá</InlineLabel>
            <TextBox id="rate" $w={80} readOnly value="1,00" />
          </Currency>
        </TabRow>
        <ItemsGrid />
      </DocBody>
      <SpecDialog />
    </DocWindow>
  );
}

export default function App() {
  return (
    <Screen>
      <GlobalStyle />
      <MainWindow>
        <MainTitle>MISA SME.NET 2020 R7 Enterprise - Công ty TNHH XYZ</MainTitle>
        <MenuBar>
          <PlainButton>Tệp</PlainButton><PlainButton>Danh mục</PlainButton><PlainButton>Nghiệp vụ</PlainButton><PlainButton>Hệ thống</PlainButton>
        </MenuBar>
        <BranchBar>
          <PlainButton $gap={13}><Page />Chọn chi nhánh làm việc</PlainButton>
          <PlainButton $gap={8}><Lens />Tìm kiếm</PlainButton>
        </BranchBar>
        <MainBody>
          <MainSidebar />
          <BackgroundLists />
        </MainBody>
      </MainWindow>
      <PurchaseWindow />
      <Faq $right={198} $w={167} $h={19} $bg="#0aa2f5">
        <svg width="16" height="16" viewBox="0 0 16 16"><circle cx="8" cy="7" r="8" fill="#fff" /><path d="M5.500 5.500c0-3.300 5-3 5-.2C10.500 7 8 7.200 8 9M8 10.200V12" fill="none" stroke="#0aa2f5" strokeWidth="1.700" /></svg>
        <span>Câu hỏi thường gặp</span><Chevron />
      </Faq>
      <Faq $right={53} $w={144} $h={23} $bg="#0568ff">
        <svg width="17" height="14" viewBox="0 0 17 14" fill="none" stroke="#fff"><circle cx="7" cy="5.500" r="5.700" strokeWidth="1.300" /><path d="M2 9l-1 3 4-1M14 5c3 2 2.500 5 1 6l1 2.500-4-1c-2 .5-3 0-4-1" strokeWidth="1.300" /><path d="M5.300 4.300c0-2 3.400-2 3.400 0C8.700 5.500 7 5.500 7 7M7 8v1" strokeWidth="1.200" /></svg>
        <span>Tư vấn sử dụng</span><Chevron />
      </Faq>
      <AppButtons><Min /><Restore /><Close /></AppButtons>
      <Account>
        <svg width="22" height="24" viewBox="0 0 22 24"><circle cx="11" cy="12.500" r="10.500" fill="#1c9be8" /><path d="M2 8c4-6 13-7 17-2-3 0-4 3-3 6s-3 5-8 4-7-4-6-8z" fill="#9fdcfb" /><path d="M8 6c5 1 7 4 7 8s-2 5-5 5c2-3 0-9-2-13z" fill="#0d5fae" /></svg>
        <Badge>1.1</Badge>
        <svg width="24" height="24" viewBox="0 0 24 24"><circle cx="12" cy="12" r="11" fill="#b3b3b3" stroke="#f2f2f2" strokeWidth="1.400" /><circle cx="12" cy="9.500" r="4" fill="#fff" /><path d="M5 18.500c1-6 13-6 14 0-3 3-11 3-14 0z" fill="#fff" /></svg>
        <Initial>A</Initial>
        <Down />
      </Account>
      <Marks width="1335" height="634" fill="none" stroke="#f21414" strokeWidth="1.800">
        <path d="M278 401C262 398 246 398 232 400C210 402 180 402 158 402C154 408 153 418 162 423C178 427 215 429 235 427C248 425 258 426 265 422C276 416 276 408 281 400M235 399C246 400 254 402 261 404" />
        <path d="M984 403C965 405 945 403 930 404C923 406 922 418 926 421C940 423 962 425 974 421C985 418 1003 420 1005 411C1007 404 998 402 987 402" />
        <path d="M1014 429C985 428 960 427 945 428C918 426 890 428 868 428C866 436 867 445 885 450C910 455 955 454 985 449C1003 446 1001 440 1004 438L1015 429" />
      </Marks>
    </Screen>
  );
}
